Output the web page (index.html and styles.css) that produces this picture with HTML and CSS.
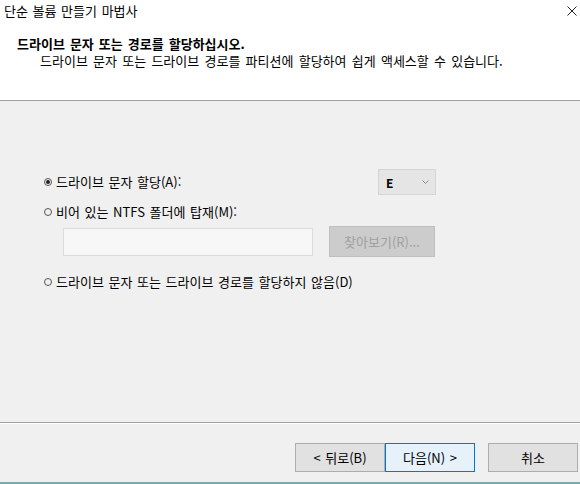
FILE: index.html
```html
<!DOCTYPE html>
<html lang="ko">
<head>
    <meta charset="UTF-8">
    <title>단순 볼륨 만들기 마법사</title>
    <link rel="stylesheet" href="styles.css">
</head>
<body>
    <div class="wizard">
        <div class="top">
            <div class="titlebar">
                <span class="title">단순 볼륨 만들기 마법사</span>
                <svg class="close" width="10" height="10" viewBox="0 0 10 10">
                    <path d="M0.5 0.5 L9.5 9.5 M9.5 0.5 L0.5 9.5" stroke="#222" stroke-width="1" fill="none"/>
                </svg>
            </div>
            <div class="header">
                <h1>드라이브 문자 또는 경로를 할당하십시오.</h1>
                <p>드라이브 문자 또는 드라이브 경로를 파티션에 할당하여 쉽게 액세스할 수 있습니다.</p>
            </div>
        </div>

        <div class="content">
            <div class="row row-letter">
                <label class="radio"><span class="dot checked"></span>드라이브 문자 할당(A):</label>
                <div class="combo">
                    <span>E</span>
                    <svg width="7" height="4" viewBox="0 0 7 4">
                        <path d="M0.5 0.5 L3.5 3.5 L6.5 0.5" stroke="#888" fill="none"/>
                    </svg>
                </div>
            </div>
            <div class="row row-folder">
                <label class="radio"><span class="dot"></span>비어 있는 NTFS 폴더에 탑재(M):</label>
            </div>
            <div class="row row-path">
                <div class="path-input"></div>
                <button class="btn browse" disabled>찾아보기(R)...</button>
            </div>
            <div class="row row-none">
                <label class="radio"><span class="dot"></span>드라이브 문자 또는 드라이브 경로를 할당하지 않음(D)</label>
            </div>
        </div>

        <div class="footer">
            <button class="btn">&lt; 뒤로(B)</button>
            <button class="btn primary">다음(N) &gt;</button>
            <button class="btn cancel">취소</button>
        </div>
        <div class="desk"></div>
    </div>
</body>
</html>
```

FILE: styles.css
```css
body {
    margin: 0;
    font-family: "Noto Sans CJK KR", "Noto Sans", sans-serif;
    font-size: 13px;
    word-spacing: 1px;
    color: #000;
}
.wizard {
    width: 580px;
    height: 484px;
    display: flex;
    flex-direction: column;
    background-color: #f0f0f0;
    overflow: hidden;
}
.top {
    background-color: #fff;
    height: 100px;
    border-bottom: 1px solid #a0a0a0;
}
.titlebar {
    display: flex;
    justify-content: space-between;
    align-items: center;
    height: 20px;
    padding: 0 3px 0 4px;
}
.close {
    margin-top: 1px;
}
.header {
    padding: 15px 0 0 17px;
}
.header h1 {
    margin: 0;
    font-size: 13px;
    font-weight: bold;
    line-height: 18px;
    word-spacing: 1.4px;
}
.header p {
    margin: 0 0 0 23px;
    line-height: 16px;
    word-spacing: 1.6px;
}
.content {
    flex: 1;
    padding: 68px 0 0 44px;
    border-bottom: 1px solid #a0a0a0;
    box-shadow: 0 1px 0 #fff;
}
.row {
    display: flex;
    align-items: center;
}
.row-letter {
    height: 26px;
    justify-content: space-between;
    width: 392px;
}
.row-folder {
    height: 16px;
    margin-top: 9px;
}
.row-path {
    margin: 6px 0 0 19px;
    gap: 16px;
}
.row-none {
    height: 16px;
    margin-top: 17px;
}
.radio {
    display: flex;
    align-items: center;
    line-height: 16px;
}
.dot {
    box-sizing: border-box;
    width: 8px;
    height: 8px;
    margin-right: 4px;
    border: 1px solid #555;
    border-radius: 50%;
    position: relative;
}
.dot.checked::after {
    content: "";
    position: absolute;
    left: 1px;
    top: 1px;
    width: 4px;
    height: 4px;
    border-radius: 50%;
    background-color: #222;
}
.combo {
    box-sizing: border-box;
    width: 58px;
    height: 26px;
    display: flex;
    align-items: center;
    justify-content: space-between;
    padding: 0 6px 0 7px;
    background-color: #e5e5e5;
    border: 1px solid #d4d4d4;
    font-size: 12px;
    font-weight: bold;
}
.path-input {
    box-sizing: border-box;
    width: 250px;
    height: 28px;
    background-color: #f7f7f7;
    border: 1px solid #dcdcdc;
}
.btn {
    box-sizing: border-box;
    width: 90px;
    height: 29px;
    padding: 0;
    font-family: inherit;
    font-size: 13px;
    word-spacing: 1px;
    color: #000;
    background-color: #e1e1e1;
    border: 1px solid #adadad;
}
.btn.primary {
    background-color: #e5f1fb;
    border-color: #0078d7;
}
.btn.browse {
    width: 106px;
    height: 31px;
    color: #a0a0a0;
    background-color: #cccccc;
    border-color: #bfbfbf;
}
.btn.cancel {
    margin-left: 13px;
}
.footer {
    display: flex;
    justify-content: flex-end;
    padding: 20px 2px 10px 0;
}
.desk {
    height: 2px;
    background-color: #7aa6b8;
}
```
